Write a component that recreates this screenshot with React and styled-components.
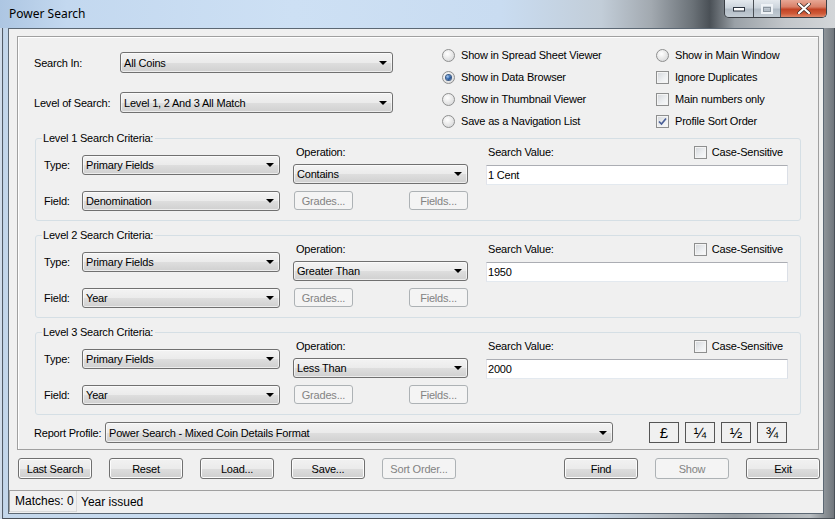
import React from "react";
import styled, { createGlobalStyle } from "styled-components";

const GlobalStyle = createGlobalStyle`
  html, body {
    margin: 0;
    padding: 0;
  }
  body {
    width: 835px;
    height: 519px;
    overflow: hidden;
    font-family: "Liberation Sans", Arial, sans-serif;
    font-size: 11px;
    letter-spacing: -0.2px;
    color: #000;
  }
  * { box-sizing: border-box; }
`;

const Window = styled.div`
  width: 835px;
  height: 519px;
  display: flex;
  flex-direction: column;
  background: linear-gradient(90deg, #9fb4c9 0%, #c3d6ea 0.5%, #c9dcf0 20%, #cfe0f3 50%, #c8d9ea 70%, #b3bac1 80%, #9aa1a7 88%, #b9bec2 97%, #6d7379 100%);
  box-shadow: inset 2px 0 0 #d0dcea, inset 3px 0 0 #525b66, inset -1px -1px 0 #4a5058;
`;

const TitleBar = styled.div`
  position: relative;
  height: 28px;
  flex-shrink: 0;
  display: flex;
  align-items: center;
  padding-left: 9px;
  background: linear-gradient(90deg, #adc6e2 0%, #c3d8ef 8%, #cde0f4 35%, #c9dcf1 60%, #c2cdd8 72%, #a2a9b0 78%, #6a7177 83%, #4a5056 85%, #9aa1a7 88%, #c2c6ca 94%, #d3d6d9 100%);
`;

const Title = styled.span`
  font-family: "Noto Sans", "Open Sans", sans-serif;
  font-size: 12px;
  letter-spacing: 0;
  color: #000;
  margin-top: -1px;
`;

const Caption = styled.div`
  position: absolute;
  top: 0;
  right: 8px;
  height: 18px;
  display: flex;
  border: 1px solid #3a3e44;
  border-top: none;
  border-radius: 0 0 5px 5px;
  overflow: hidden;
`;

const CapBtn = styled.div`
  width: ${({ w }) => w}px;
  height: 100%;
  display: flex;
  align-items: center;
  justify-content: center;
  border-left: ${({ first }) => (first ? "none" : "1px solid #4a4f55")};
  background: ${({ close }) =>
    close
      ? "linear-gradient(#e7a795 0%, #d98169 40%, #c24325 55%, #cf5a38 80%, #e0886b 100%)"
      : "linear-gradient(#e4e9ee 0%, #ccd4dc 45%, #b2bcc6 55%, #c3ccd4 100%)"};
`;

const Client = styled.div`
  flex: 1;
  margin: 0 11px 5px 8px;
  border: 1px solid #5c6874;
  background: #f0f0f0;
  padding: 7px 0 0 0;
  display: flex;
  flex-direction: column;
`;

const Panel = styled.div`
  height: 414px;
  margin: 0 4px 0 8px;
  border: 1px solid #a0a0a0;
  box-shadow: inset 1px 1px 0 #ffffff;
  display: flex;
  flex-direction: column;
`;

const TopSection = styled.div`
  height: 101px;
  display: flex;
  padding-left: 16px;
`;

const SearchBlock = styled.div`
  display: flex;
  flex-direction: column;
  gap: 19px;
  padding-top: 15px;
`;

const FormRow = styled.div`
  display: flex;
  align-items: center;
`;

const FieldLabel = styled.span`
  width: ${({ w }) => w}px;
  flex-shrink: 0;
  white-space: nowrap;
`;

const Combo = styled.div`
  position: relative;
  width: ${({ w }) => w}px;
  height: ${({ h }) => h || 20}px;
  margin-top: ${({ mt }) => mt || 0}px;
  border: 1px solid #707070;
  border-radius: 3px;
  background: linear-gradient(#f3f3f3 0%, #ebebeb 50%, #dedede 51%, #d0d0d0 100%);
  box-shadow: inset 0 0 0 1px rgba(255, 255, 255, 0.6);
  padding-left: 3px;
  display: flex;
  align-items: center;
  white-space: nowrap;
  overflow: hidden;

  &::after {
    content: "";
    position: absolute;
    right: 5px;
    top: 50%;
    margin-top: -2px;
    border-left: 4px solid transparent;
    border-right: 4px solid transparent;
    border-top: 4px solid #000;
  }
`;

const OptionGrid = styled.div`
  display: grid;
  grid-template-columns: 214px auto;
  grid-auto-rows: 22px;
  margin-left: 49px;
  padding-top: 7px;
  align-content: start;
`;

const Option = styled.label`
  display: flex;
  align-items: center;
  gap: 6px;
  white-space: nowrap;
`;

const RadioCircle = styled.span`
  width: 13px;
  height: 13px;
  border-radius: 50%;
  border: 1px solid #8e8f8f;
  background: radial-gradient(circle at 40% 35%, #ffffff 0%, #e8e8e8 50%, #cfd1d4 100%);
  display: flex;
  align-items: center;
  justify-content: center;
  flex-shrink: 0;

  &::after {
    content: "";
    display: ${({ checked }) => (checked ? "block" : "none")};
    width: 5px;
    height: 5px;
    border-radius: 50%;
    background: radial-gradient(circle at 35% 35%, #a9cdf5 0%, #2a5fa6 50%, #173a6a 100%);
    box-shadow: 0 0 0 1px #3c5b85;
  }
`;

const CheckBox = styled.span`
  width: 13px;
  height: 13px;
  border: 1px solid #8e8f8f;
  background: linear-gradient(135deg, #d3d6da 0%, #eef0f2 60%, #fafafa 100%);
  box-shadow: inset 0 0 0 1px #f4f4f4;
  display: flex;
  align-items: center;
  justify-content: center;
  flex-shrink: 0;
`;

const Levels = styled.div`
  display: flex;
  flex-direction: column;
  gap: 14px;
  padding-left: 17px;
`;

const LevelGroup = styled.div`
  position: relative;
  width: 766px;
  height: 83px;
  border: 1px solid #d5dfe5;
  border-radius: 3px;
  display: flex;
  padding-left: 8px;
`;

const Legend = styled.span`
  position: absolute;
  top: -7px;
  left: 6px;
  padding: 0 2px 0 1px;
  background: #f0f0f0;
  line-height: 13px;
`;

const ColA = styled.div`
  display: flex;
  flex-direction: column;
  gap: 16px;
  padding-top: 16px;
`;

const ColB = styled.div`
  width: 175px;
  margin-left: 13px;
  display: flex;
  flex-direction: column;
`;

const ColHead = styled.div`
  height: 16px;
  margin-top: 5px;
  display: flex;
  align-items: center;
  justify-content: space-between;
  padding-left: ${({ pad }) => pad || 0}px;
`;

const BtnPair = styled.div`
  display: flex;
  justify-content: space-between;
  padding-left: 1px;
  margin-top: 7px;
`;

const ColC = styled.div`
  width: 302px;
  margin-left: 18px;
  display: flex;
  flex-direction: column;
`;

const CaseOption = styled(Option)`
  gap: 5px;
  padding-right: 5px;
`;

const TextBox = styled.div`
  height: 20px;
  margin-top: 5px;
  background: #fff;
  border: 1px solid #abadb3;
  border-left-color: #e2e3ea;
  border-right-color: #dbdfe6;
  border-bottom-color: #e3e9ef;
  padding-left: 1px;
  display: flex;
  align-items: center;
`;

const Button = styled.div`
  width: ${({ w }) => w || 74}px;
  height: ${({ h }) => h || 21}px;
  border: 1px solid ${({ disabled }) => (disabled ? "#adb2b5" : "#707070")};
  border-radius: 3px;
  background: ${({ disabled }) =>
    disabled ? "#f4f4f4" : "linear-gradient(#f2f2f2 0%, #ebebeb 50%, #dddddd 51%, #cfcfcf 100%)"};
  box-shadow: inset 0 0 0 1px ${({ disabled }) => (disabled ? "#f4f4f4" : "#fcfcfc")};
  color: ${({ disabled }) => (disabled ? "#838383" : "#000")};
  display: flex;
  align-items: center;
  justify-content: center;
  white-space: nowrap;
`;

const ReportRow = styled.div`
  display: flex;
  align-items: center;
  margin-top: 7px;
  padding-left: 16px;
`;

const Symbols = styled.div`
  display: flex;
  gap: 6px;
  margin-left: 36px;
`;

const SymbolBtn = styled.div`
  width: 30px;
  height: 21px;
  border: 1px solid #555;
  background: #f0f0f0;
  display: flex;
  align-items: center;
  justify-content: center;
  font-size: 15px;
  letter-spacing: 0;
  line-height: 1;
`;

const ButtonBar = styled.div`
  display: flex;
  margin-top: 8px;
  padding-left: 9px;
  gap: 17px;
`;

const Spacer = styled.div`
  width: ${({ w }) => w}px;
`;

const StatusBar = styled.div`
  height: 22px;
  margin: 11px 0 0 0;
  border-top: 1px solid #a0a0a0;
  border-left: 1px solid #a0a0a0;
  display: flex;
  align-items: stretch;
`;

const StatusCell = styled.div`
  width: ${({ w }) => (w ? `${w}px` : "auto")};
  flex: ${({ w }) => (w ? "none" : 1)};
  display: flex;
  align-items: center;
  padding-left: ${({ pad }) => pad}px;
  font-size: 12px;
  letter-spacing: 0;
  border-right: ${({ w }) => (w ? "1px solid #d9d9d9" : "none")};
  border-bottom: ${({ w }) => (w ? "1px solid #d9d9d9" : "none")};
`;

const Check = () => (
  <svg width="11" height="11" viewBox="0 0 11 11">
    <path d="M2 5.5 L4.5 8 L9 2.5" fill="none" stroke="#4a5f97" strokeWidth="1.7" />
  </svg>
);

const Radio = ({ checked, children }) => (
  <Option>
    <RadioCircle checked={checked} />
    {children}
  </Option>
);

const Checkbox = ({ checked, children, as: Comp = Option }) => (
  <Comp>
    <CheckBox>{checked && <Check />}</CheckBox>
    {children}
  </Comp>
);

const levels = [
  { n: 1, op: "Contains", field: "Denomination", value: "1 Cent" },
  { n: 2, op: "Greater Than", field: "Year", value: "1950" },
  { n: 3, op: "Less Than", field: "Year", value: "2000" },
];

function Level({ n, op, field, value }) {
  return (
    <LevelGroup>
      <Legend>Level {n} Search Criteria:</Legend>
      <ColA>
        <FormRow>
          <FieldLabel w={38}>Type:</FieldLabel>
          <Combo w={198}>Primary Fields</Combo>
        </FormRow>
        <FormRow>
          <FieldLabel w={38}>Field:</FieldLabel>
          <Combo w={198}>{field}</Combo>
        </FormRow>
      </ColA>
      <ColB>
        <ColHead pad={3}>Operation:</ColHead>
        <Combo w={175} mt={4}>{op}</Combo>
        <BtnPair>
          <Button w={59} h={19} disabled>Grades...</Button>
          <Button w={59} h={19} disabled>Fields...</Button>
        </BtnPair>
      </ColB>
      <ColC>
        <ColHead pad={2}>
          <span>Search Value:</span>
          <Checkbox as={CaseOption}>Case-Sensitive</Checkbox>
        </ColHead>
        <TextBox>{value}</TextBox>
      </ColC>
    </LevelGroup>
  );
}

export default function App() {
  return (
    <>
      <GlobalStyle />
      <Window>
        <TitleBar>
          <Title>Power Search</Title>
          <Caption>
            <CapBtn w={28} first>
              <svg width="12" height="6" viewBox="0 0 12 6">
                <rect x="0.5" y="1.5" width="11" height="3.5" fill="#fff" stroke="#2d3440" />
              </svg>
            </CapBtn>
            <CapBtn w={27}>
              <svg width="12" height="10" viewBox="0 0 12 10">
                <rect x="1" y="1" width="10" height="8" fill="none" stroke="#eef2f6" strokeWidth="2" />
                <rect x="2.5" y="3.5" width="7" height="4" fill="none" stroke="#8a949e" strokeWidth="1" />
              </svg>
            </CapBtn>
            <CapBtn w={46} close>
              <svg width="14" height="11" viewBox="0 0 14 11">
                <path d="M2 1 L12 10 M12 1 L2 10" stroke="#3a2a26" strokeWidth="3.6" strokeLinecap="round" />
                <path d="M2 1 L12 10 M12 1 L2 10" stroke="#fff" strokeWidth="2.2" strokeLinecap="round" />
              </svg>
            </CapBtn>
          </Caption>
        </TitleBar>
        <Client>
          <Panel>
            <TopSection>
              <SearchBlock>
                <FormRow>
                  <FieldLabel w={86}>Search In:</FieldLabel>
                  <Combo w={273} h={21}>All Coins</Combo>
                </FormRow>
                <FormRow>
                  <FieldLabel w={86}>Level of Search:</FieldLabel>
                  <Combo w={273} h={21}>Level 1, 2 And 3 All Match</Combo>
                </FormRow>
              </SearchBlock>
              <OptionGrid>
                <Radio>Show in Spread Sheet Viewer</Radio>
                <Radio>Show in Main Window</Radio>
                <Radio checked>Show in Data Browser</Radio>
                <Checkbox>Ignore Duplicates</Checkbox>
                <Radio>Show in Thumbnail Viewer</Radio>
                <Checkbox>Main numbers only</Checkbox>
                <Radio>Save as a Navigation List</Radio>
                <Checkbox checked>Profile Sort Order</Checkbox>
              </OptionGrid>
            </TopSection>
            <Levels>
              {levels.map((l) => (
                <Level key={l.n} {...l} />
              ))}
            </Levels>
            <ReportRow>
              <FieldLabel w={71}>Report Profile:</FieldLabel>
              <Combo w={508} h={21}>Power Search - Mixed Coin Details Format</Combo>
              <Symbols>
                <SymbolBtn>£</SymbolBtn>
                <SymbolBtn>¼</SymbolBtn>
                <SymbolBtn>½</SymbolBtn>
                <SymbolBtn>¾</SymbolBtn>
              </Symbols>
            </ReportRow>
          </Panel>
          <ButtonBar>
            <Button>Last Search</Button>
            <Button>Reset</Button>
            <Button>Load...</Button>
            <Button>Save...</Button>
            <Button disabled>Sort Order...</Button>
            <Spacer w={74} />
            <Button>Find</Button>
            <Button disabled>Show</Button>
            <Button>Exit</Button>
          </ButtonBar>
          <StatusBar>
            <StatusCell w={67} pad={5}>Matches: 0</StatusCell>
            <StatusCell pad={4}>Year issued</StatusCell>
          </StatusBar>
        </Client>
      </Window>
    </>
  );
}
